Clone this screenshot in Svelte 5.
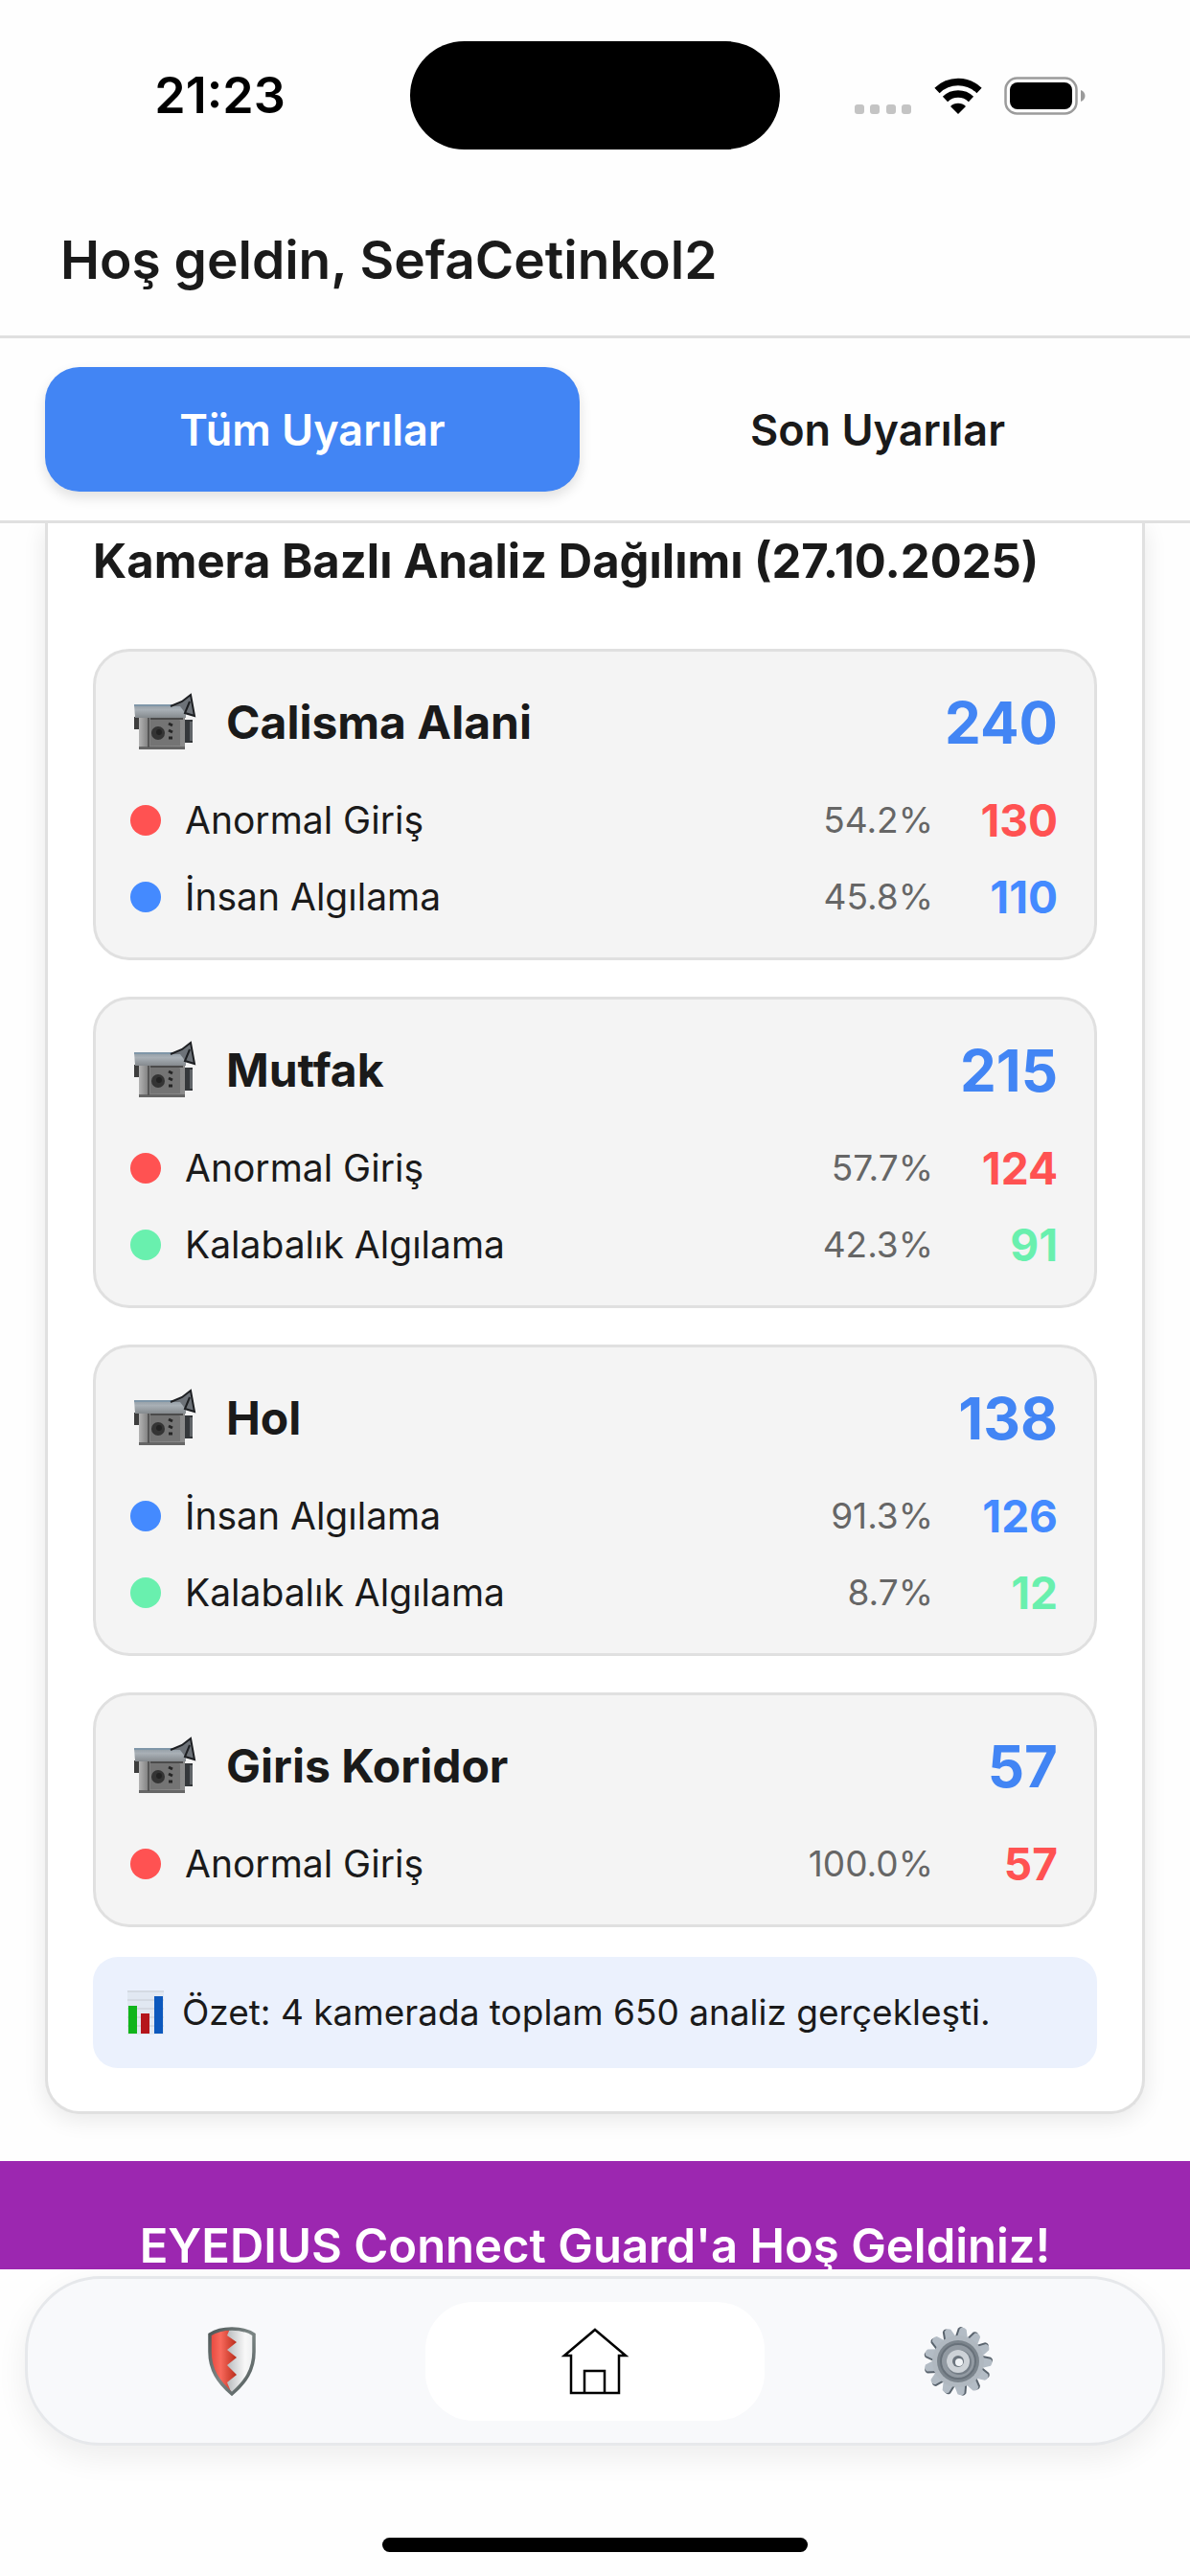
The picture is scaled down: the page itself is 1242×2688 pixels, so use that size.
<script>
  const colors = {
    person: "#448aff",
    abnormal: "#ff5252",
    crowd: "#69f0ae",
  };

  const labels = {
    person: "İnsan Algılama",
    abnormal: "Anormal Giriş",
    crowd: "Kalabalık Algılama",
  };

  let cameras = [
    {
      name: "Calisma Alani",
      total: 240,
      rows: [
        { type: "abnormal", percent: "54.2%", count: 130 },
        { type: "person", percent: "45.8%", count: 110 },
      ],
    },
    {
      name: "Mutfak",
      total: 215,
      rows: [
        { type: "abnormal", percent: "57.7%", count: 124 },
        { type: "crowd", percent: "42.3%", count: 91 },
      ],
    },
    {
      name: "Hol",
      total: 138,
      rows: [
        { type: "person", percent: "91.3%", count: 126 },
        { type: "crowd", percent: "8.7%", count: 12 },
      ],
    },
    {
      name: "Giris Koridor",
      total: 57,
      rows: [{ type: "abnormal", percent: "100.0%", count: 57 }],
    },
  ];

  let activeTab = "all";
  let activePage = "home";

  const teeth = Array.from({ length: 13 }, (_, i) => (i * 360) / 13 + 8);

  $: sum = cameras.reduce((acc, c) => acc + c.total, 0);
</script>

<svelte:head>
  <title>EYEDIUS Connect Guard</title>
</svelte:head>

<div class="page">
  <div class="status">
    <div class="status__time">21:23</div>
    <div class="status__island"></div>
    <div class="status__icons">
      <svg width="60" height="40" viewBox="0 0 60 40" fill="#c4c4c4">
        <rect x="0" y="29" width="10" height="10" rx="3" />
        <rect x="16" y="29" width="10" height="10" rx="3" />
        <rect x="33" y="29" width="10" height="10" rx="3" />
        <rect x="49" y="29" width="10" height="10" rx="3" />
      </svg>
      <svg width="52" height="40" viewBox="0 0 52 40">
        <path
          d="M4 14.500A31.500 31.500 0 0 1 48 14.500M12.500 23.500A19.500 19.500 0 0 1 39.500 23.500"
          fill="none"
          stroke="#000"
          stroke-width="7.500"
        />
        <path d="M26 39 18 31a11.500 11.500 0 0 1 16 0z" />
      </svg>
      <svg width="86" height="40" viewBox="0 0 86 40">
        <rect
          x="1.500"
          y="1.500"
          width="74"
          height="37"
          rx="12"
          fill="none"
          stroke="#9b9b9b"
          stroke-width="2.500"
        />
        <rect x="6" y="6" width="65" height="28" rx="8" />
        <path d="M80 14c6 2 6 10 0 12z" fill="#9b9b9b" />
      </svg>
    </div>
  </div>

  <header>
    <h1>Hoş geldin, SefaCetinkol2</h1>
  </header>

  <div class="tabs">
    <button class:active={activeTab === "all"} on:click={() => (activeTab = "all")}
      >Tüm Uyarılar</button
    >
    <button
      class:active={activeTab === "last"}
      on:click={() => (activeTab = "last")}>Son Uyarılar</button
    >
  </div>

  <main>
    <section class="panel">
      <h2>Kamera Bazlı Analiz Dağılımı (27.10.2025)</h2>
      <div class="cameras">
        {#each cameras as camera}
          <article class="camera">
            <div class="camera__head">
              <svg class="camera__icon" viewBox="0 -2 68 60">
                <defs>
                  <linearGradient id="cam-top" x1="0" y1="0" x2="0" y2="1">
                    <stop offset="0" stop-color="#8f9aa3" />
                    <stop offset="0.400" stop-color="#a9b0b6" />
                    <stop offset="1" stop-color="#858a8e" />
                  </linearGradient>
                  <linearGradient id="cam-body" x1="0" y1="0" x2="1" y2="0">
                    <stop offset="0" stop-color="#b4b4b4" />
                    <stop offset="0.200" stop-color="#818181" />
                    <stop offset="1" stop-color="#8b8b8b" />
                  </linearGradient>
                </defs>
                <path d="M4 22h6v13H4z" fill="#3d3d3d" />
                <path d="M57 25h8v24h-8z" fill="#34373a" />
                <path d="M62 27h3v20h-3z" fill="#606468" />
                <path d="M9 22h48v34H9z" fill="url(#cam-body)" />
                <path d="M9 53h48v3H9z" fill="#666" />
                <path d="M4 9h54v14H5z" fill="url(#cam-top)" />
                <path d="M4 9h46v2H4z" fill="#7f96a8" />
                <path d="M18 23h2v31h-2z" fill="#555" />
                <path d="M21 23h28l3 3v26H21z" fill="#747474" />
                <path d="M21 23h34v2H21z" fill="#4b4b4b" />
                <circle cx="29" cy="39" r="7" fill="#343434" />
                <circle cx="30" cy="38" r="3" fill="#222" />
                <path
                  d="m40 29 4 2m-4 5 4 2m-4 6h4"
                  stroke="#252525"
                  stroke-width="3"
                />
                <path d="M42 11 54 6 63-1 67 21 58 19 52 11z" fill="#6d7278" />
                <path
                  d="M42 11 54 6 63-1 67 21 57 18 62 6"
                  fill="none"
                  stroke="#1d1f22"
                  stroke-width="2"
                />
              </svg>
              <h3>{camera.name}</h3>
              <span class="camera__total">{camera.total}</span>
            </div>
            <ul>
              {#each camera.rows as row}
                <li>
                  <span class="dot" style="background: {colors[row.type]}"
                  ></span>
                  <span class="label">{labels[row.type]}</span>
                  <span class="percent">{row.percent}</span>
                  <span class="count" style="color: {colors[row.type]}"
                    >{row.count}</span
                  >
                </li>
              {/each}
            </ul>
          </article>
        {/each}
      </div>
      <div class="summary">
        <svg class="summary__icon" viewBox="0 0 38 46">
          <path d="M0 0h38v46H0z" fill="#e1e8f2" />
          <path
            d="M0 1h38M0 10h38M0 19h38M0 28h38M0 37h38"
            stroke="#d4dae3"
            stroke-width="2"
          />
          <path d="M1 16h9v29H1z" fill="#10b51b" />
          <path d="M14 24h9v21h-9z" fill="#b5151c" />
          <path d="M28 6h9v39h-9z" fill="#0c58bd" />
        </svg>
        <p>Özet: {cameras.length} kamerada toplam {sum} analiz gerçekleşti.</p>
      </div>
    </section>

    <div class="banner">EYEDIUS Connect Guard'a Hoş Geldiniz!</div>
  </main>

  <nav>
    <button
      aria-label="Güvenlik"
      class:active={activePage === "guard"}
      on:click={() => (activePage = "guard")}
    >
      <svg viewBox="0 0 76 76">
        <defs>
          <linearGradient id="shield-red" x1="0" y1="0" x2="1" y2="0">
            <stop offset="0" stop-color="#e5463d" />
            <stop offset="0.400" stop-color="#f9695c" />
            <stop offset="1" stop-color="#b92c1b" />
          </linearGradient>
          <linearGradient id="shield-white" x1="0" y1="0" x2="1" y2="0">
            <stop offset="0.400" stop-color="#b9bcbf" />
            <stop offset="0.800" stop-color="#f8f8f8" />
            <stop offset="1" stop-color="#eceeef" />
          </linearGradient>
          <linearGradient id="shield-rim" x1="0" y1="0" x2="1" y2="1">
            <stop offset="0" stop-color="#4e5757" />
            <stop offset="0.500" stop-color="#7c8685" />
            <stop offset="1" stop-color="#4f5858" />
          </linearGradient>
        </defs>
        <path
          d="M38 4c8 0 17 2 23 6v18c0 19-9 32-23 44C24 60 15 47 15 28V10c6-4 15-6 23-6z"
          fill="url(#shield-white)"
        />
        <path
          d="M36 4 33 11 43 18 33 26 43 34 33 42 43 52 33 60 38 72C24 60 15 47 15 28V10c6-4 13-6 21-6z"
          fill="url(#shield-red)"
        />
        <path
          d="M38 4c8 0 17 2 23 6v18c0 19-9 32-23 44C24 60 15 47 15 28V10c6-4 15-6 23-6z"
          fill="none"
          stroke="url(#shield-rim)"
          stroke-width="3.500"
        />
      </svg>
    </button>
    <button
      aria-label="Ana sayfa"
      class:active={activePage === "home"}
      on:click={() => (activePage = "home")}
    >
      <svg
        viewBox="0 0 76 76"
        fill="none"
        stroke="#000"
        stroke-width="2.500"
        stroke-linejoin="miter"
      >
        <path d="M38 5 70 32H63V71H13V32H6zM27 71V48H48V71" />
      </svg>
    </button>
    <button
      aria-label="Ayarlar"
      class:active={activePage === "settings"}
      on:click={() => (activePage = "settings")}
    >
      <svg viewBox="0 0 76 76">
        {#each teeth as angle}
          <g transform="rotate({angle} 38 38)">
            <path d="M31 15 33 4q3-4 7 0l3 11z" fill="#59636d" />
            <path d="M33 15 35 4q3-3 7 0l3 11z" fill="#b3bcc5" />
          </g>
        {/each}
        <circle cx="38" cy="38" r="27" fill="#b0b8c0" />
        <circle cx="38" cy="38" r="22" fill="#7b848c" />
        <circle
          cx="38"
          cy="38"
          r="18"
          fill="#929aa2"
          stroke="#68717a"
          stroke-width="2"
        />
        <circle cx="39" cy="39" r="13" fill="#757e87" />
        <circle cx="38" cy="38" r="12" fill="#cdd2d7" />
        <circle cx="38" cy="38" r="6" fill="#6c757e" />
        <circle cx="39" cy="39" r="4" fill="#f0f3f6" />
      </svg>
    </button>
  </nav>

  <div class="home-indicator"></div>
</div>

<style>
  :global(body) {
    margin: 0;
    background: #fefefe;
  }

  .page {
    --line: #e0e0e0;
    --blue: #4285f4;
    min-height: 100vh;
    display: flex;
    flex-direction: column;
    background: #fefefe;
    color: #1a1a1a;
    font-family: Inter, "Noto Sans", sans-serif;
  }

  .page * {
    box-sizing: border-box;
  }

  h1,
  h2,
  h3,
  p,
  ul {
    margin: 0;
    padding: 0;
  }

  button {
    border: none;
    background: none;
    padding: 0;
    font: inherit;
    color: inherit;
    cursor: pointer;
  }

  .status {
    display: grid;
    grid-template-columns: 1fr 386px 1fr;
    align-items: center;
    justify-items: center;
    padding: 43px 31px;
    color: #000;
  }

  .status__time {
    font-size: 52px;
    font-weight: 600;
    line-height: 64px;
  }

  .status__island {
    width: 100%;
    height: 113px;
    border-radius: 57px;
    background: #000;
  }

  .status__icons {
    display: flex;
    gap: 22px;
  }

  header {
    padding: 40px 63px 47px;
    border-bottom: 3px solid var(--line);
  }

  h1 {
    font-size: 55px;
    font-weight: 600;
    line-height: 64px;
  }

  /* sits above the panel so its shadow doesn't leak over the border */
  .tabs {
    position: relative;
    z-index: 1;
    display: grid;
    grid-template-columns: 1fr 1fr;
    gap: 32px;
    padding: 30px 47px;
    border-bottom: 3px solid var(--line);
    background: #fefefe;
  }

  .tabs button {
    height: 130px;
    border-radius: 36px;
    font-size: 45px;
    font-weight: 600;
  }

  .tabs button.active {
    background: var(--blue);
    color: #fff;
    box-shadow: 0 6px 13px rgba(0, 0, 0, 0.12);
  }

  .panel {
    margin: 0 47px 49px;
    padding: 8px 47px 45px;
    border: 3px solid var(--line);
    border-top: none;
    border-radius: 0 0 36px 36px;
    background: #fff;
    box-shadow: 0 6px 25px rgba(0, 0, 0, 0.09);
  }

  h2 {
    margin-bottom: 59px;
    font-size: 49px;
    font-weight: 700;
    line-height: 64px;
  }

  .cameras {
    display: grid;
    gap: 38px;
  }

  .camera {
    padding: 38px 38px 38px 36px;
    border: 3px solid var(--line);
    border-radius: 38px;
    background: #f4f4f4;
  }

  .camera__head {
    display: flex;
    align-items: center;
    margin-bottom: 41px;
    line-height: 72px;
  }

  .camera__icon {
    width: 68px;
    height: 60px;
    margin-right: 32px;
    overflow: visible;
  }

  h3 {
    flex: 1;
    font-size: 48px;
    font-weight: 700;
  }

  .camera__total {
    color: var(--blue);
    font-size: 60px;
    font-weight: 700;
  }

  ul {
    display: grid;
    gap: 30px;
    list-style: none;
  }

  li {
    display: flex;
    align-items: center;
    line-height: 50px;
  }

  .dot {
    width: 32px;
    height: 32px;
    margin-right: 25px;
    border-radius: 50%;
  }

  .label {
    flex: 1;
    font-size: 39px;
  }

  .percent {
    color: #666;
    font-size: 37px;
  }

  .count {
    width: 130px;
    font-size: 46px;
    font-weight: 700;
    text-align: right;
  }

  .summary {
    display: flex;
    align-items: center;
    gap: 19px;
    margin-top: 31px;
    padding: 30px 36px;
    border-radius: 26px;
    background: #ebf1fd;
    font-size: 37px;
    line-height: 56px;
  }

  .summary__icon {
    width: 38px;
    height: 46px;
  }

  .banner {
    padding-top: 65px;
    background: #9c27b0;
    color: #fff;
    font-size: 49px;
    font-weight: 600;
    line-height: 48px;
    text-align: center;
  }

  nav {
    display: grid;
    grid-template-columns: repeat(3, 1fr);
    gap: 25px;
    margin: 7px 26px 0;
    padding: 24px 36px 23px;
    border: 3px solid #e6e8eb;
    border-radius: 79px;
    background: #f8f9fb;
    box-shadow: 0 12px 32px rgba(0, 0, 0, 0.07);
  }

  nav button {
    display: flex;
    align-items: center;
    justify-content: center;
    height: 124px;
    border-radius: 50px;
  }

  nav button.active {
    background: #fff;
  }

  nav svg {
    width: 76px;
    height: 76px;
  }

  .home-indicator {
    width: 444px;
    height: 15px;
    margin: auto auto 25px;
    border-radius: 8px;
    background: #000;
  }
</style>
